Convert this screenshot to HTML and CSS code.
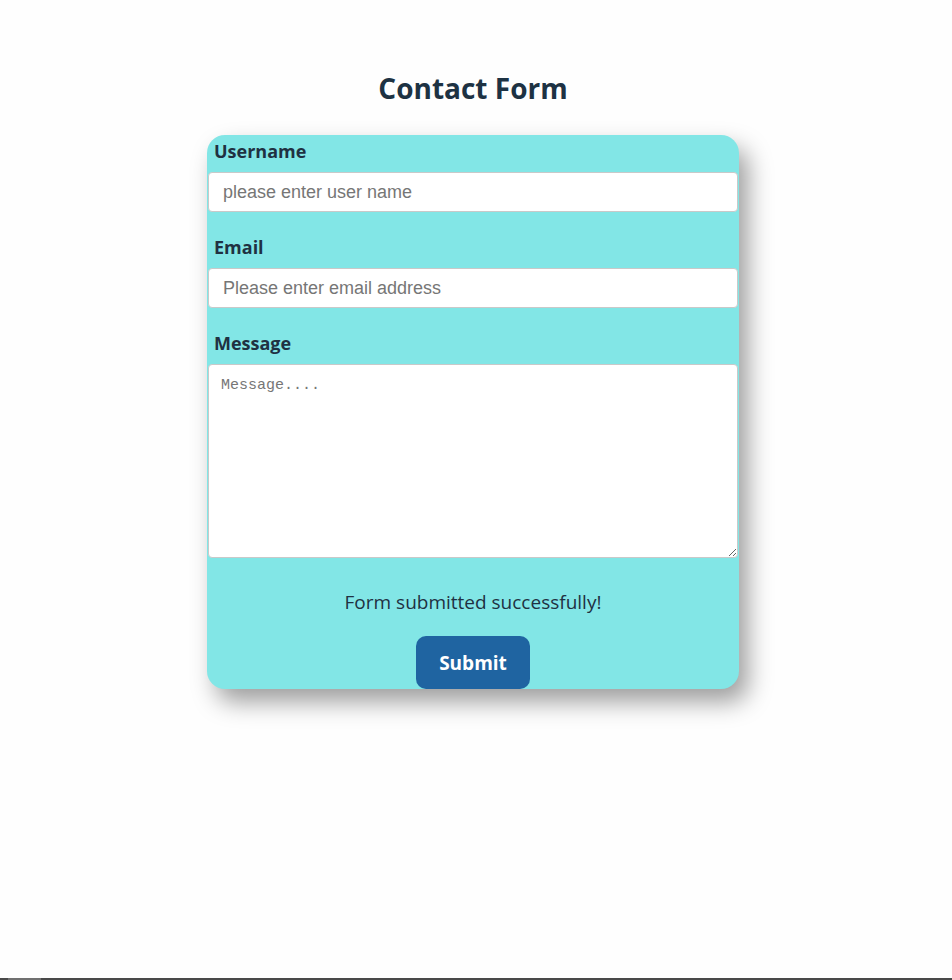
FILE: index.html
```html
<!DOCTYPE html>
<html lang="en">
<head>
<meta charset="utf-8">
<title>Contact Form</title>
<link rel="stylesheet" href="styles.css">
</head>
<body>
<div class="page">
  <h1 class="title">Contact Form</h1>
  <form class="card">
    <div class="field">
      <label class="label" for="username">Username</label>
      <input class="input" id="username" type="text" placeholder="please enter user name">
    </div>
    <div class="field">
      <label class="label" for="email">Email</label>
      <input class="input" id="email" type="email" placeholder="Please enter email address">
    </div>
    <div class="field">
      <label class="label" for="message">Message</label>
      <textarea class="textarea" id="message" placeholder="Message...."></textarea>
    </div>
    <p class="status">Form submitted successfully!</p>
    <div class="actions">
      <button class="submit" type="button">Submit</button>
    </div>
  </form>
</div>
<div class="hscroll"><div class="hscroll-thumb"></div></div>
</body>
</html>
```

FILE: styles.css
```css
html, body {
  margin: 0;
  padding: 0;
  background: #fefefe;
}
body {
  font-family: "Open Sans", "Noto Sans", sans-serif;
  color: #1f3142;
  min-height: 980px;
}
.page {
  display: flex;
  flex-direction: column;
  align-items: center;
  padding: 68px 0 100px 0;
  width: 946px;
}
.title {
  margin: 0 0 27px 0;
  font-size: 28px;
  line-height: 40px;
  font-weight: 700;
  color: #1d3243;
}
.card {
  width: 532px;
  box-sizing: border-box;
  background: #82e6e6;
  border-radius: 18px;
  box-shadow: 9px 13px 24px rgba(0, 0, 0, 0.38);
  padding: 4px 1px 0 1px;
  display: flex;
  flex-direction: column;
}
.field {
  display: flex;
  flex-direction: column;
  margin-bottom: 23px;
}
.label {
  font-size: 18px;
  font-weight: 700;
  line-height: 25px;
  padding-left: 6px;
  margin-bottom: 8px;
  color: #1f3142;
}
.input {
  height: 40px;
  box-sizing: border-box;
  border: 1px solid #c9c9c9;
  border-radius: 4px;
  background: #fff;
  padding: 0 14px;
  font-family: "Liberation Sans", Arial, sans-serif;
  font-size: 18px;
  color: #333;
  outline: none;
}
.input::placeholder {
  color: #767676;
}
.textarea {
  height: 194px;
  box-sizing: border-box;
  border: 1px solid #c9c9c9;
  border-radius: 4px;
  background: #fff;
  padding: 12px 12px;
  font-family: "Liberation Mono", monospace;
  font-size: 15px;
  color: #333;
  outline: none;
}
.textarea::placeholder {
  color: #767676;
}
.status {
  margin: 9px 0 21px 0;
  text-align: center;
  font-size: 19px;
  line-height: 25px;
  color: #1f3142;
}
.actions {
  display: flex;
  justify-content: center;
}
.submit {
  width: 114px;
  height: 53px;
  border: none;
  border-radius: 10px;
  background: #1f64a1;
  color: #fff;
  font-family: "Open Sans", "Noto Sans", sans-serif;
  font-size: 19px;
  font-weight: 700;
  cursor: pointer;
}
.hscroll {
  position: fixed;
  left: 0;
  right: 0;
  bottom: 0;
  height: 2px;
  background: #494949;
}
.hscroll-thumb {
  margin-left: 8px;
  width: 33px;
  height: 2px;
  background: #707070;
}
```
